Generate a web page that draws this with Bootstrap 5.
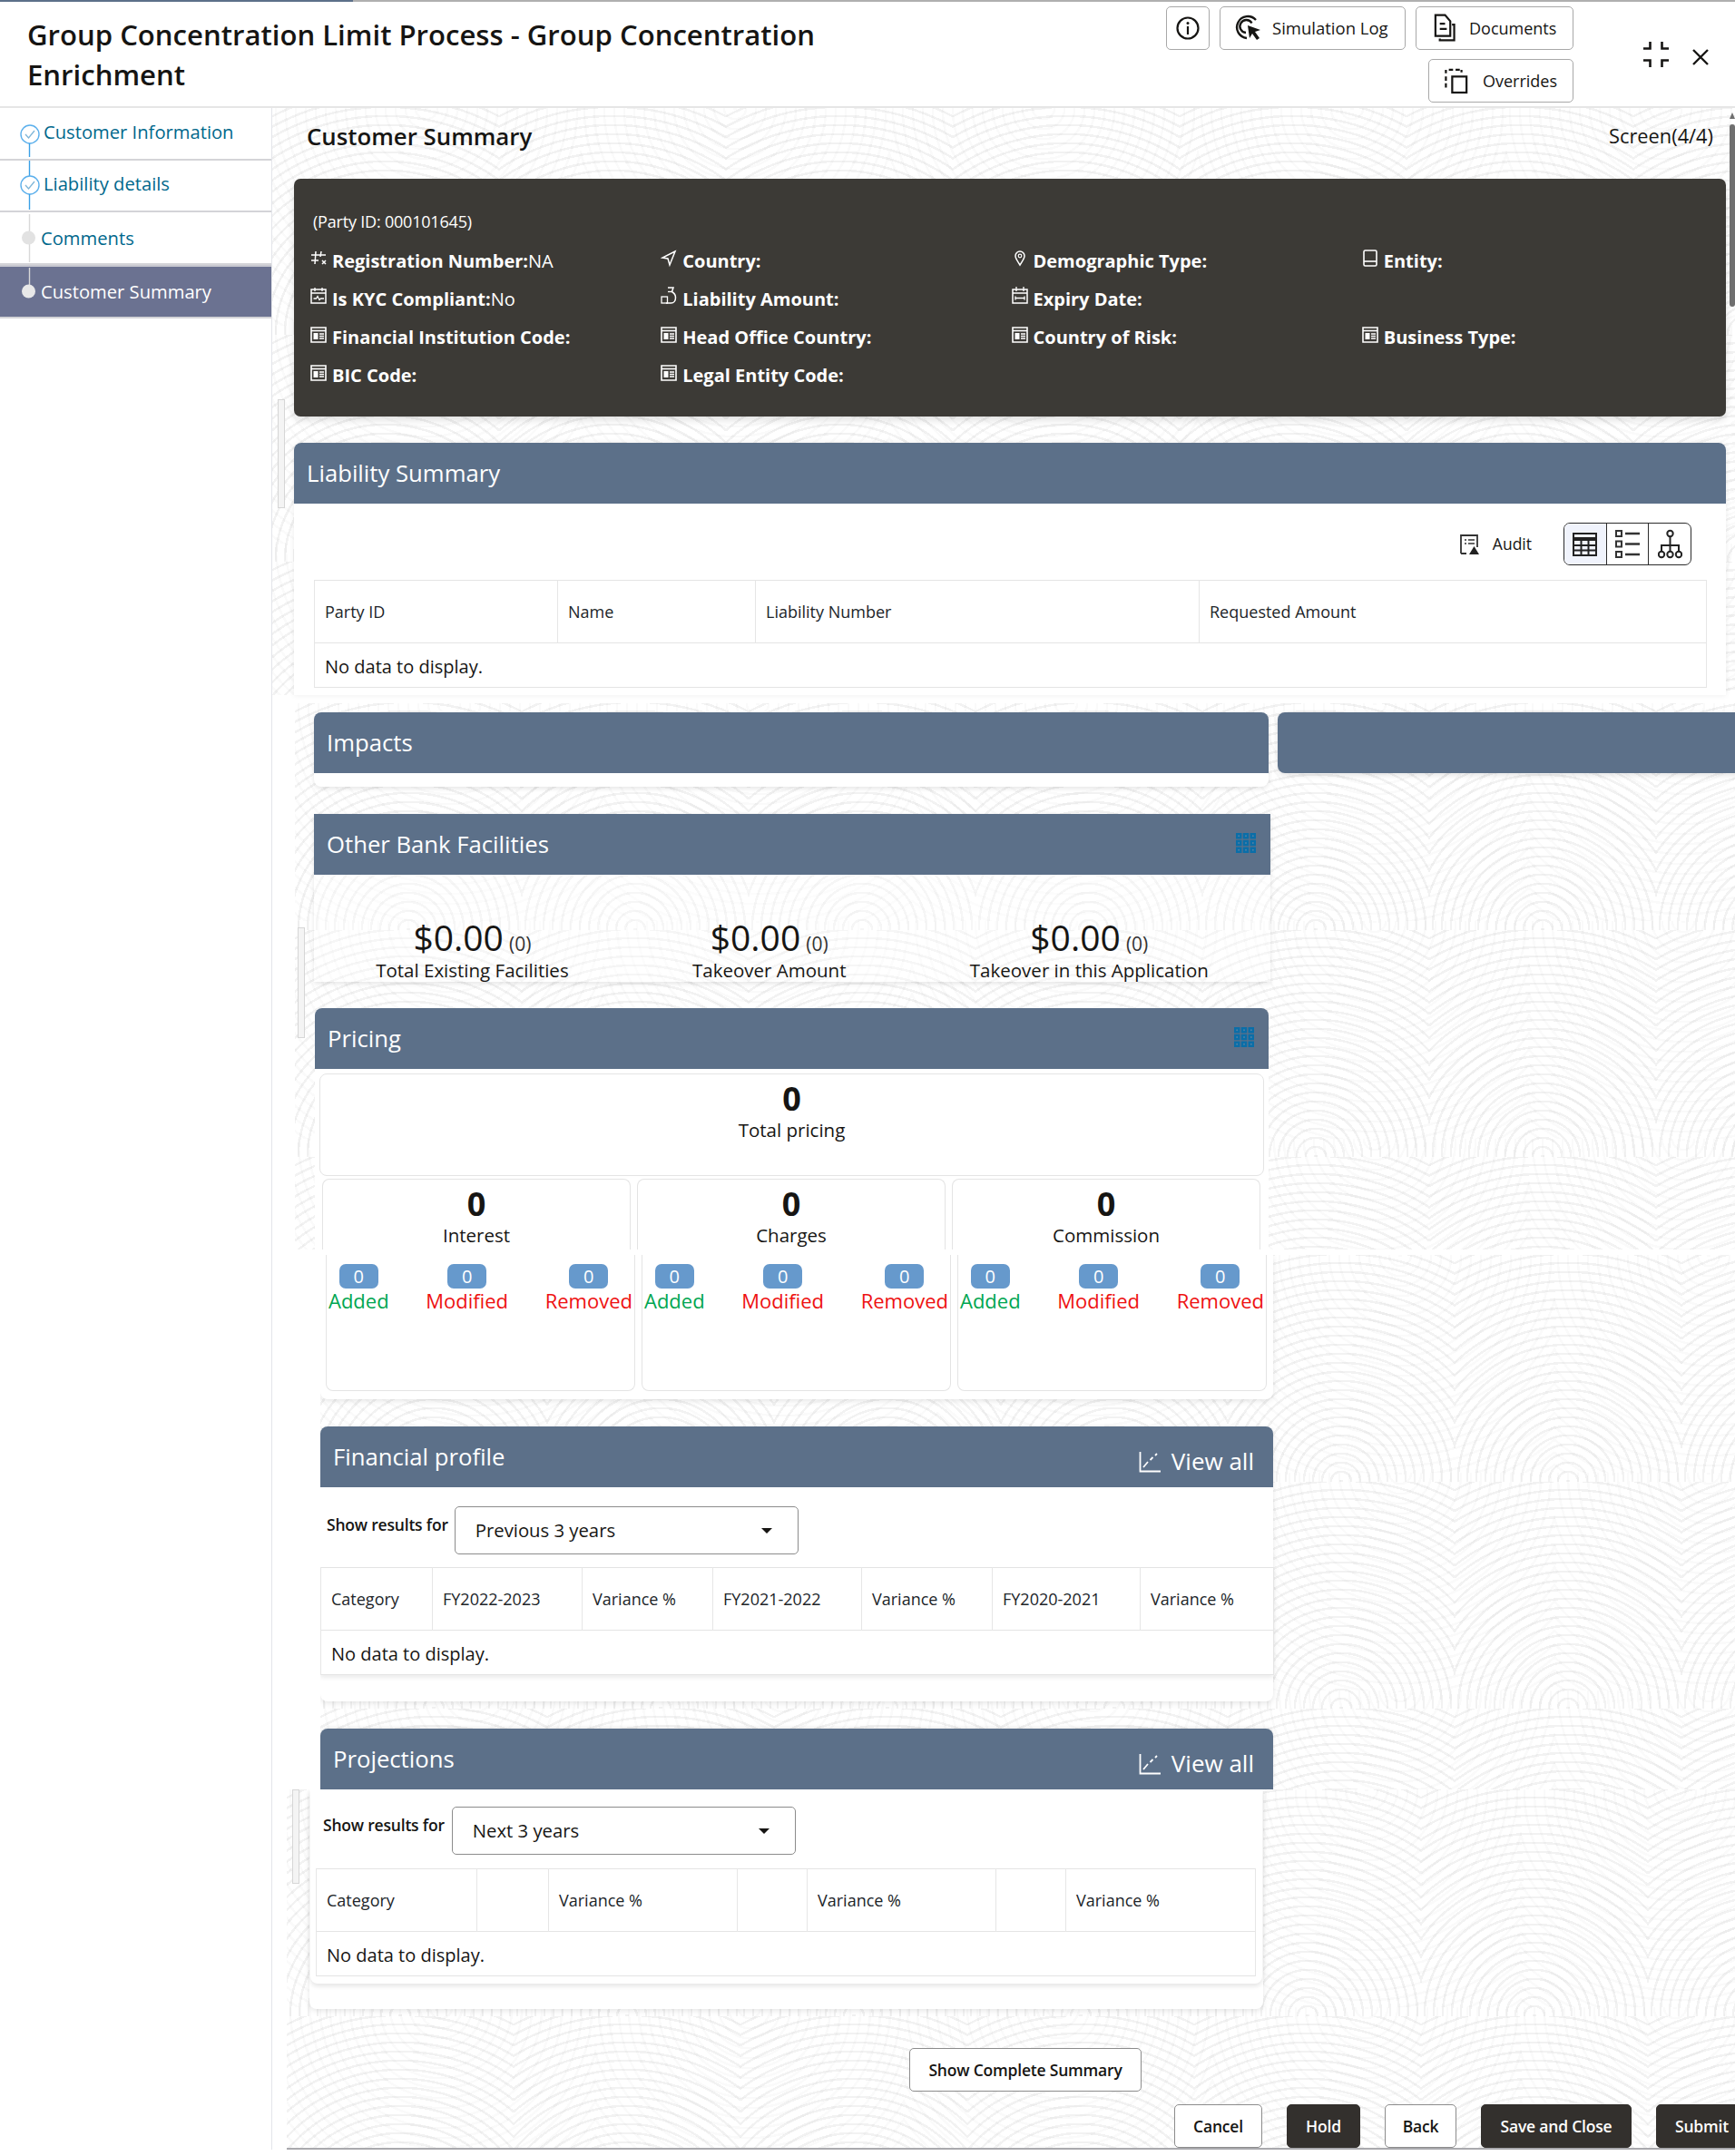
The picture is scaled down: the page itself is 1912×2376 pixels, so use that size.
<!DOCTYPE html>
<html lang="en">
<head>
<meta charset="utf-8">
<title>Group Concentration Limit Process</title>
<link href="https://cdn.jsdelivr.net/npm/bootstrap@5.3.0/dist/css/bootstrap.min.css" rel="stylesheet">
<style>
html,body{margin:0;background:#fff}
body{width:1912px;height:2376px;overflow:hidden;position:relative;font-family:"Open Sans","Noto Sans",sans-serif;color:#161513;font-size:19px}
.pat{background-color:#fff;background-image:
 repeating-radial-gradient(circle at 125px 250px,rgba(0,0,0,.05) 0 2.5px,transparent 2.5px 10px),
 repeating-radial-gradient(circle at 170px 0,rgba(0,0,0,.018) 0 2.5px,transparent 2.5px 11px);
 background-size:250px 250px,340px 240px}
.flex-none{flex:none}
.topline{height:2px;background:linear-gradient(90deg,#5c7089 0 389px,#b0b0b0 389px)}
.hdr{height:117px;border-bottom:2px solid #e6e6e6}
.hdr-title{width:960px;padding:14px 0 0 30px;font-size:31.1px;line-height:44px;font-weight:600;margin:0}
.hdr-btns{width:449px;margin-left:auto;padding-top:5px}
.hb{height:48px;padding:0;font-size:18px;font-weight:500;color:#161513;border:1px solid #a8a8a8;border-radius:5px;background:#fff;white-space:nowrap}
.hb-i{width:48px}
.hb-s{width:205px;gap:11px;padding-left:16px;font-size:18.5px}
.hb-d{width:174px;gap:15px;padding-left:18px}
.hb-o{width:160px;gap:16px;padding-left:17px}
.hb-gap{gap:11px}
.hb-2{margin-top:10px}
.winctl{width:178px;padding:43px 0 0 76px;gap:24px}
.side{width:299px;flex:none}
.step{height:57.5px;border-bottom:2px solid #d4d4d8;color:#00688c;font-size:20.2px;padding-left:21px}
.step.on{background:#6b7291;color:#fff;border-top:2px solid #c8c8d0;height:59px}
.step svg{flex:none}
.step-t{margin-left:3px;margin-top:-4px}
.step-g{margin-left:0;margin-top:0}
.main-area{width:1613px;flex:none;border-left:1px solid #e3e5ea}
.sec-a{height:647px;padding:0 10px 0 24px}
.ttl-row{height:78px;padding:12px 14px 0 14px}
.ttl{font-size:25.8px;font-weight:600;line-height:38px}
.scr{font-size:21.8px;line-height:38px}
.dark{height:262px;background:#3c3a36;color:#fff;border-radius:7px;padding:31px 17px 0 16px;box-shadow:0 4px 8px rgba(0,0,0,.12);font-size:20px;font-weight:700}
.party{font-size:18px;font-weight:400;line-height:32px;margin-bottom:7px;padding-left:5px;letter-spacing:-.2px}
.info-row{height:42px;line-height:42px}
.info-row svg{flex:none;margin:0 6px 0 2px;position:relative;top:-3px}
.info-row span{font-weight:400}
.lcard{margin-top:29px;height:278px;background:#fff;border:0;border-radius:7px 7px 0 0;box-shadow:0 0 6px rgba(0,0,0,.08)}
.chead{height:67px;background:#5c7089;color:#fff;font-size:25.7px;line-height:67px;padding:0 14px;border:0;white-space:nowrap}
.r8{border-radius:8px 8px 0 0}
.toolbar{height:84px;padding:21px 38px 0 0;font-size:17.5px;font-weight:500}
.audit{gap:14px;margin-right:35px;height:47px}
.vgroup{width:141px;height:47px;border:1px solid #2c2c2c;border-radius:7px;overflow:hidden}
.vgroup div{height:100%;flex:1;border-left:1px solid #2c2c2c}
.vgroup div:first-child{border-left:0;background:#f0f3fc}
.tbl-x{margin:0 22px;width:1534px}
.dt{table-layout:fixed;margin:0;border-color:#e4e4e4;background:#fff;--bs-table-bg:#fff}
.dt th{height:69px;padding:0 11px;font-size:18px;font-weight:500;vertical-align:middle;border-color:#e6e6e6;white-space:nowrap}
.dt td{height:49px;padding:3px 11px 0;font-size:20px;vertical-align:middle;border-color:#e6e6e6;color:#161513}
.sec-b{height:602px;margin-left:25px;padding:10px 0 0 21px;overflow:hidden;margin-top:9px}
.w1052{width:1052px;flex:none}
.w600{width:600px;flex:none}
.imp{height:82px;background:#fff;border:0;border-radius:8px;box-shadow:0 2px 5px rgba(0,0,0,.1)}
.blank{height:67px;background:#5c7089;border-radius:8px;box-shadow:0 2px 6px rgba(0,0,0,.12)}
.gap10{gap:10px}
.obf{width:1054px;margin-top:30px;height:185px;border:0;background:rgba(255,255,255,.35);border-radius:0;box-shadow:0 2px 5px rgba(0,0,0,.1)}
.grid-ic{flex:none;margin:0 2px 4px 0}
.stats{height:118px;padding-top:46px}
.amt{font-size:39px;line-height:46px;text-align:center}
.amt small{font-size:21px;color:#333;margin-left:-4px}
.amt-l{font-size:20.5px;line-height:24px;white-space:nowrap;margin-top:-6px}
.pricing{width:1051px;margin:29px 0 0 1px;height:295px;background:#fff;border:0;overflow:hidden;border-radius:8px 8px 0 0}
.pbox{margin:5px 5px 3px;height:113px;border:1px solid #e4e4e4;border-radius:8px;text-align:center;padding-top:5px}
.num{font-size:36px;font-weight:700;line-height:44px}
.lab{font-size:20.5px;line-height:28px;margin-top:-2px}
.subs{padding-left:8px;gap:7px}
.sbox{width:340px;height:90px;border:1px solid #e4e4e4;border-bottom:0;border-radius:8px 8px 0 0;text-align:center;padding-top:5px}
.sec-c{height:589px;margin-left:53px;margin-top:6px;overflow:hidden}
.w1050{width:1050px}
.pend{height:159px;background:#fff;padding:0 6px;gap:7px;border-radius:0 0 8px 8px;box-shadow:0 2px 6px rgba(0,0,0,.1)}
.sbot{width:341px;height:150px;border:1px solid #e4e4e4;border-top:0;border-radius:0 0 8px 8px;padding:10px 2px 0;gap:0}
.stat{text-align:center;font-size:22px;line-height:30px}
.cnt{display:inline-block;width:43px;height:27px;line-height:27px;border-radius:7px;background:#6699cc;color:#fff;font-size:20px;padding:0;font-weight:400;vertical-align:top}
.stat-l{display:block;margin-top:-5px}
.c-add{color:#00a651}
.c-rem{color:#ee1111}
.fcard{width:1050px;margin-top:30px;height:303px;background:#fff;border:0;border-radius:8px;box-shadow:0 2px 6px rgba(0,0,0,.1)}
.phead{width:1050px;margin-top:30px;height:67px;border-radius:8px 8px 0 0;box-shadow:0 -1px 4px rgba(0,0,0,.1)}
.viewall{font-size:26px;line-height:67px;padding-top:10px;padding-right:7px;gap:12px}
.filter{height:88px;padding:21px 0 0 7px;gap:7px}
.sr{font-size:17.5px;font-weight:600;line-height:20px;padding-top:10px;letter-spacing:-.2px;white-space:nowrap}
.sel{width:379px;height:53px;border:1px solid #8c8c8c;border-radius:5px;font-size:20.3px;color:#161513;padding:0 28px 0 22px;background:#fff}
.sel::after{margin-left:0}
.w1050t{box-shadow:0 3px 5px rgba(0,0,0,.08)}
.sec-d{height:397px;margin-left:16px;overflow:hidden;position:relative}
.pbody{width:1051px;margin-left:25px;height:242px;background:#fff;border-radius:0 0 8px 8px;box-shadow:0 2px 6px rgba(0,0,0,.1);padding:0 1px}
.pwrap{height:214px;border-radius:0 0 8px 8px;box-shadow:0 3px 5px rgba(0,0,0,.1)}
.filter2{height:87px;padding:19px 0 0 14px;gap:8px}
.tbl-p{margin:0 6px 0 6px;width:1036px}
.bb{height:48px;padding:0 10px;font-size:17.5px;font-weight:600;border:1px solid #8c8c8c;border-radius:5px;color:#161513;background:#fff;white-space:nowrap;letter-spacing:-.2px}
.bb-d{background:#33302d;border-color:#33302d;color:#fff;font-weight:600}
.scs{margin:43px 0 0 686px;width:256px;padding:0}
.foot{margin:14px 0 0 978px;gap:27px;width:700px}
.rule{height:2px;background:#a9a9ad;margin-top:0}
.c-c{width:97px}.c-h{width:81px}.c-b{width:79px}.c-s{width:166px}.c-u{width:101px}
.thumb{position:absolute;width:8px;background:#f4f4f4;border:1px solid #d6d6d6}
.t1{left:306px;top:440px;height:120px}
.t2{left:328px;top:1022px;height:122px}
.t3{left:322px;top:1972px;height:104px}
.vbar{position:absolute;left:1906px;top:137px;width:6px;height:201px;background:#6f6f6f;border-radius:3px}
.varrow{position:absolute;left:1906px;top:124px;width:0;height:0;border-left:3px solid transparent;border-right:3px solid transparent;border-bottom:7px solid #6f6f6f}
.cA1{width:268px}.cA2{width:218px}.cA3{width:489px}.cA4{width:559px}
.cF1{width:123px}.cF2{width:165px}.cF3{width:144px}.cF4{width:164px}.cF5{width:144px}.cF6{width:163px}.cF7{width:147px}
.cP1{width:177px}.cP2{width:79px}.cP3{width:208px}.cP4{width:77px}.cP5{width:208px}.cP6{width:77px}.cP7{width:209px}
</style>
</head>
<body>
<svg width="0" height="0" class="d-none">
 <symbol id="i-calc" viewBox="1 1 18 18"><path d="M2 2h16v16H2z" fill="none" stroke="#fff" stroke-width="1.6"/><path d="M2 5.500h16" stroke="#fff" stroke-width="1.6"/><rect x="4.500" y="8" width="5" height="7" fill="#fff"/><path d="M11 9h5M11 11.500h5M11 14h5" stroke="#fff" stroke-width="1.3"/></symbol>
 <symbol id="i-grid" viewBox="0 0 22 22"><g fill="#0a6ea8"><path d="M0 0h6.500v6.500H0zM7.700 0h6.500v6.500H7.700zM15.500 0H22v6.500h-6.500zM0 7.700h6.500v6.500H0zM7.700 7.700h6.500v6.500H7.700zM15.500 7.700H22v6.500h-6.500zM0 15.500h6.500V22H0zM7.700 15.500h6.500V22H7.700zM15.500 15.500H22V22h-6.500z"/></g><g fill="#4f7fa5"><circle cx="3.200" cy="3.200" r="1"/><circle cx="11" cy="3.200" r="1"/><circle cx="18.800" cy="3.200" r="1"/><circle cx="3.200" cy="11" r="1"/><circle cx="11" cy="11" r="1"/><circle cx="18.800" cy="11" r="1"/><circle cx="3.200" cy="18.800" r="1"/><circle cx="11" cy="18.800" r="1"/><circle cx="18.800" cy="18.800" r="1"/></g></symbol>
 <symbol id="i-chart" viewBox="0 0 24 24"><path d="M1.500 1v21.500H24" fill="none" stroke="#fff" stroke-width="1.8"/><path d="M5 18l5-6M12.500 10l3-3M18 5l2-2" fill="none" stroke="#fff" stroke-width="1.8"/></symbol>
</svg>

<div class="topline"></div>
<header class="hdr d-flex">
 <h1 class="hdr-title">Group Concentration Limit Process - Group Concentration Enrichment</h1>
 <div class="hdr-btns">
  <div class="d-flex hb-gap justify-content-end">
   <button class="btn hb hb-i d-flex align-items-center justify-content-center" aria-label="Info"><svg width="28" height="28" viewBox="0 0 28 28"><circle cx="14" cy="14" r="11.500" fill="none" stroke="#161513" stroke-width="2.2"/><path d="M14 12v9" stroke="#161513" stroke-width="2.2"/><circle cx="14" cy="8.400" r="1.500" fill="#161513"/></svg></button>
   <button class="btn hb hb-s d-flex align-items-center"><svg width="30" height="32" viewBox="0 0 30 32"><path d="M23 7A12 12 0 1 0 13 27" fill="none" stroke="#161513" stroke-width="2.4"/><path d="M18.500 10.500A7 7 0 1 0 12 21" fill="none" stroke="#161513" stroke-width="2.4"/><path d="M14 13l14 5-6 2 5 7-3 2-5-7-3 5z" fill="#161513"/></svg>Simulation Log</button>
   <button class="btn hb hb-d d-flex align-items-center"><svg width="25" height="34" viewBox="0 0 26 34"><path d="M3 2h11l6 7v17H3z" fill="none" stroke="#161513" stroke-width="2.3"/><path d="M8 12h6M8 18h8" stroke="#161513" stroke-width="2.3"/><path d="M22 13h2.500v18H8v-2" fill="none" stroke="#161513" stroke-width="2.3"/></svg>Documents</button>
  </div>
  <div class="d-flex justify-content-end hb-2">
   <button class="btn hb hb-o d-flex align-items-center"><svg width="26" height="30" viewBox="0 0 28 30"><path d="M1.500 2v4M1.500 10v5M1.500 18v5M5 2h5M13 2h5M20 2v3" fill="none" stroke="#161513" stroke-width="2.4"/><rect x="9" y="10" width="17" height="19" fill="none" stroke="#161513" stroke-width="2.4"/></svg>Overrides</button>
  </div>
 </div>
 <div class="winctl d-flex align-items-start">
  <svg width="30" height="30" viewBox="0 0 30 30" aria-hidden="true"><path d="M8.500 1v7.500H1M21.500 1v7.500H29M1 21.500h7.500V29M29 21.500h-7.500V29" fill="none" stroke="#161513" stroke-width="2.6"/></svg>
  <svg width="20" height="20" viewBox="0 0 20 20" class="mt-2" aria-hidden="true"><path d="M2 2l16 16M18 2L2 18" stroke="#161513" stroke-width="2.4"/></svg>
 </div>
</header>

<div class="d-flex">
 <aside class="side">
  <div class="step d-flex align-items-center">
   <svg width="24" height="58" viewBox="0 0 24 58"><circle cx="12" cy="30" r="10" fill="#fff" stroke="#5cb0ec" stroke-width="1.400"/><path d="M7 30l3.500 4L17 26" fill="none" stroke="#7fb6d8" stroke-width="1.300"/><path d="M11.500 40v15" stroke="#3aa0e6" stroke-width="1.400"/></svg>
   <span class="step-t">Customer Information</span>
  </div>
  <div class="step d-flex align-items-center">
   <svg width="24" height="58" viewBox="0 0 24 58"><path d="M11.500 2v17" stroke="#3aa0e6" stroke-width="1.400"/><circle cx="12" cy="29" r="10" fill="#fff" stroke="#5cb0ec" stroke-width="1.400"/><path d="M7 29l3.500 4L17 25" fill="none" stroke="#7fb6d8" stroke-width="1.300"/><path d="M11.500 39v17" stroke="#3aa0e6" stroke-width="1.400"/></svg>
   <span class="step-t">Liability details</span>
  </div>
  <div class="step d-flex align-items-center">
   <svg width="24" height="58" viewBox="0 0 24 58"><path d="M11.500 3v53" stroke="#d8d8d8" stroke-width="1.400"/><circle cx="10.500" cy="29" r="7.500" fill="#e2e2e2"/></svg>
   <span class="step-g">Comments</span>
  </div>
  <div class="step on d-flex align-items-center">
   <svg width="24" height="58" viewBox="0 0 24 58"><path d="M11.500 3v20" stroke="#d8d8d8" stroke-width="1.400"/><circle cx="10.500" cy="29" r="7.500" fill="#e8e8e8"/></svg>
   <span class="step-g">Customer Summary</span>
  </div>
 </aside>

 <main class="main-area">
  <section class="sec-a pat">
   <div class="ttl-row d-flex justify-content-between">
    <div class="ttl">Customer Summary</div>
    <div class="scr">Screen(4/4)</div>
   </div>
   <div class="dark">
    <div class="party">(Party ID: 000101645)</div>
    <div class="row g-0">
     <div class="col-3 info-row d-flex"><svg width="18" height="42" viewBox="0 0 18 42"><path d="M6 13l-1 14M12 13l-1 6M1 17h16M1 23h8M13 23l4 4M13 27l4-4" fill="none" stroke="#fff" stroke-width="1.500"/></svg>Registration Number:<span>NA</span></div>
     <div class="col-3 info-row d-flex"><svg width="18" height="42" viewBox="0 0 18 42"><path d="M16 13L2 20l6 1 2 7z" fill="none" stroke="#fff" stroke-width="1.500"/></svg>Country:</div>
     <div class="col-3 info-row d-flex"><svg width="18" height="42" viewBox="0 0 18 42"><path d="M9 28c-3-5-5-7-5-10a5 5 0 0 1 10 0c0 3-2 5-5 10z" fill="none" stroke="#fff" stroke-width="1.500"/><circle cx="9" cy="18" r="1.800" fill="none" stroke="#fff" stroke-width="1.200"/></svg>Demographic Type:</div>
     <div class="col-3 info-row d-flex"><svg width="18" height="42" viewBox="0 0 18 42"><rect x="2" y="12" width="14" height="17" rx="1.500" fill="none" stroke="#fff" stroke-width="1.600"/><path d="M2 24h14" stroke="#fff" stroke-width="1.600"/></svg>Entity:</div>

     <div class="col-3 info-row d-flex"><svg width="18" height="42" viewBox="0 0 18 42"><rect x="1" y="13" width="16" height="15" fill="none" stroke="#fff" stroke-width="1.500"/><path d="M5 11v4M13 11v4M1 17h16M3.500 23h3l1.500-2.500 2 4 1.500-1.500h3.500" fill="none" stroke="#fff" stroke-width="1.300"/></svg>Is KYC Compliant:<span>No</span></div>
     <div class="col-3 info-row d-flex"><svg width="18" height="42" viewBox="0 0 18 42"><path d="M8 11h6l-1.500 4.500c2.500 1.500 4 3.500 4 6.500 0 3.500-2 6-5 6H6" fill="none" stroke="#fff" stroke-width="1.500"/><path d="M8 15.500h4.500" stroke="#fff" stroke-width="1.300"/><rect x="1" y="21" width="6.500" height="7" fill="none" stroke="#fff" stroke-width="1.300"/></svg>Liability Amount:</div>
     <div class="col-3 info-row d-flex"><svg width="18" height="42" viewBox="0 0 18 42"><rect x="1" y="13" width="16" height="15" fill="none" stroke="#fff" stroke-width="1.500"/><path d="M5 10v5M13 10v5M1 17h16M4 22.500h10" fill="none" stroke="#fff" stroke-width="1.300"/><path d="M4 20.500v4M14 20.500v4" stroke="#fff" stroke-width="1.300"/></svg>Expiry Date:</div>
     <div class="col-3 info-row"></div>

     <div class="col-3 info-row d-flex"><svg width="18" height="18" class="align-self-center"><use href="#i-calc"/></svg>Financial Institution Code:</div>
     <div class="col-3 info-row d-flex"><svg width="18" height="18" class="align-self-center"><use href="#i-calc"/></svg>Head Office Country:</div>
     <div class="col-3 info-row d-flex"><svg width="18" height="18" class="align-self-center"><use href="#i-calc"/></svg>Country of Risk:</div>
     <div class="col-3 info-row d-flex"><svg width="18" height="18" class="align-self-center"><use href="#i-calc"/></svg>Business Type:</div>

     <div class="col-3 info-row d-flex"><svg width="18" height="18" class="align-self-center"><use href="#i-calc"/></svg>BIC Code:</div>
     <div class="col-3 info-row d-flex"><svg width="18" height="18" class="align-self-center"><use href="#i-calc"/></svg>Legal Entity Code:</div>
    </div>
   </div>
   <div class="card lcard">
    <div class="chead r8">Liability Summary</div>
    <div class="toolbar d-flex justify-content-end align-items-start">
     <div class="audit d-flex align-items-center">
      <svg width="22" height="24" viewBox="0 0 22 24"><path d="M1 22V2h18v13M1 22h6" fill="none" stroke="#333" stroke-width="1.800"/><path d="M5 7h2M9 7h7M5 11h2M9 11h7" stroke="#333" stroke-width="1.600"/><path d="M15.500 14l5.500 9H10z" fill="#222"/></svg>
      <span>Audit</span>
     </div>
     <div class="vgroup d-flex">
      <div class="d-flex align-items-center justify-content-center"><svg width="27" height="26" viewBox="0 0 27 26"><path d="M1 1h25v24H1z" fill="none" stroke="#222" stroke-width="2"/><path d="M1 7h25" stroke="#222" stroke-width="4"/><path d="M1 14h25M1 19.500h25M9.500 8v17M17.500 8v17" stroke="#222" stroke-width="2"/></svg></div>
      <div class="d-flex align-items-center justify-content-center"><svg width="27" height="33" viewBox="0 0 27 33"><path d="M1 2h6v6H1zM1 13.500h6v6H1zM1 25h6v6H1z" fill="none" stroke="#333" stroke-width="2"/><path d="M11 5h16M11 16.500h16M11 28h16" stroke="#333" stroke-width="2.300"/></svg></div>
      <div class="d-flex align-items-center justify-content-center"><svg width="27" height="33" viewBox="0 0 27 33"><circle cx="13.500" cy="5" r="3.200" fill="none" stroke="#222" stroke-width="2"/><path d="M13.500 8v17M4 25v-7h19v7" fill="none" stroke="#222" stroke-width="2"/><circle cx="4" cy="28" r="3.200" fill="none" stroke="#222" stroke-width="2"/><circle cx="13.500" cy="28" r="3.200" fill="none" stroke="#222" stroke-width="2"/><circle cx="23" cy="28" r="3.200" fill="none" stroke="#222" stroke-width="2"/></svg></div>
     </div>
    </div>
    <div class="tbl-x">
     <table class="table table-bordered dt">
      <colgroup><col class="cA1"><col class="cA2"><col class="cA3"><col class="cA4"></colgroup>
      <thead><tr><th>Party ID</th><th>Name</th><th>Liability Number</th><th>Requested Amount</th></tr></thead>
      <tbody><tr><td colspan="4">No data to display.</td></tr></tbody>
     </table>
    </div>
   </div>
  </section>

  <section class="sec-b pat">
   <div class="d-flex gap10">
    <div class="card imp w1052"><div class="chead r8">Impacts</div></div>
    <div class="blank w600"></div>
   </div>
   <div class="card obf">
    <div class="chead d-flex justify-content-between align-items-center"><span>Other Bank Facilities</span><svg width="22" height="22" class="grid-ic"><use href="#i-grid"/></svg></div>
    <div class="stats d-flex justify-content-around">
     <div class="text-center"><div class="amt">$0.00 <small>(0)</small></div><div class="amt-l">Total Existing Facilities</div></div>
     <div class="text-center"><div class="amt">$0.00 <small>(0)</small></div><div class="amt-l">Takeover Amount</div></div>
     <div class="text-center"><div class="amt">$0.00 <small>(0)</small></div><div class="amt-l">Takeover in this Application</div></div>
    </div>
   </div>
   <div class="card pricing">
    <div class="chead d-flex justify-content-between align-items-center"><span>Pricing</span><svg width="22" height="22" class="grid-ic"><use href="#i-grid"/></svg></div>
    <div class="pbox"><div class="num">0</div><div class="lab">Total pricing</div></div>
    <div class="d-flex subs">
     <div class="sbox"><div class="num">0</div><div class="lab">Interest</div></div>
     <div class="sbox"><div class="num">0</div><div class="lab">Charges</div></div>
     <div class="sbox"><div class="num">0</div><div class="lab">Commission</div></div>
    </div>
   </div>
  </section>

  <section class="sec-c pat">
   <div class="pend w1050 d-flex">
    <div class="sbot d-flex justify-content-between">
     <div class="stat"><span class="cnt">0</span><span class="stat-l c-add">Added</span></div>
     <div class="stat"><span class="cnt">0</span><span class="stat-l c-rem">Modified</span></div>
     <div class="stat"><span class="cnt">0</span><span class="stat-l c-rem">Removed</span></div>
    </div>
    <div class="sbot d-flex justify-content-between">
     <div class="stat"><span class="cnt">0</span><span class="stat-l c-add">Added</span></div>
     <div class="stat"><span class="cnt">0</span><span class="stat-l c-rem">Modified</span></div>
     <div class="stat"><span class="cnt">0</span><span class="stat-l c-rem">Removed</span></div>
    </div>
    <div class="sbot d-flex justify-content-between">
     <div class="stat"><span class="cnt">0</span><span class="stat-l c-add">Added</span></div>
     <div class="stat"><span class="cnt">0</span><span class="stat-l c-rem">Modified</span></div>
     <div class="stat"><span class="cnt">0</span><span class="stat-l c-rem">Removed</span></div>
    </div>
   </div>
   <div class="card fcard">
    <div class="chead r8 d-flex justify-content-between"><span>Financial profile</span><span class="viewall d-flex align-items-center"><svg width="24" height="24"><use href="#i-chart"/></svg>View all</span></div>
    <div class="filter d-flex align-items-start">
     <span class="sr">Show results for</span>
     <button class="btn sel dropdown-toggle d-flex align-items-center justify-content-between">Previous 3 years</button>
    </div>
    <div class="w1050t">
     <table class="table table-bordered dt">
      <colgroup><col class="cF1"><col class="cF2"><col class="cF3"><col class="cF4"><col class="cF5"><col class="cF6"><col class="cF7"></colgroup>
      <thead><tr><th>Category</th><th>FY2022-2023</th><th>Variance %</th><th>FY2021-2022</th><th>Variance %</th><th>FY2020-2021</th><th>Variance %</th></tr></thead>
      <tbody><tr><td colspan="7">No data to display.</td></tr></tbody>
     </table>
    </div>
   </div>
   <div class="chead phead d-flex justify-content-between"><span>Projections</span><span class="viewall d-flex align-items-center"><svg width="24" height="24"><use href="#i-chart"/></svg>View all</span></div>
  </section>

  <section class="sec-d pat">
   <div class="pbody">
    <div class="pwrap">
     <div class="filter2 d-flex align-items-start">
      <span class="sr">Show results for</span>
      <button class="btn sel dropdown-toggle d-flex align-items-center justify-content-between">Next 3 years</button>
     </div>
     <div class="tbl-p">
      <table class="table table-bordered dt">
       <colgroup><col class="cP1"><col class="cP2"><col class="cP3"><col class="cP4"><col class="cP5"><col class="cP6"><col class="cP7"></colgroup>
       <thead><tr><th>Category</th><th></th><th>Variance %</th><th></th><th>Variance %</th><th></th><th>Variance %</th></tr></thead>
       <tbody><tr><td colspan="7">No data to display.</td></tr></tbody>
      </table>
     </div>
    </div>
   </div>
   <button class="btn bb scs d-block">Show Complete Summary</button>
   <div class="foot d-flex">
    <button class="btn bb c-c flex-none">Cancel</button>
    <button class="btn bb bb-d c-h flex-none">Hold</button>
    <button class="btn bb c-b flex-none">Back</button>
    <button class="btn bb bb-d c-s flex-none">Save and Close</button>
    <button class="btn bb bb-d c-u flex-none">Submit</button>
   </div>
   <div class="rule"></div>
  </section>
 </main>
</div>

<div class="thumb t1"></div>
<div class="thumb t2"></div>
<div class="thumb t3"></div>
<div class="varrow"></div>
<div class="vbar"></div>

<script src="https://cdn.jsdelivr.net/npm/bootstrap@5.3.0/dist/js/bootstrap.bundle.min.js"></script>
</body>
</html>
